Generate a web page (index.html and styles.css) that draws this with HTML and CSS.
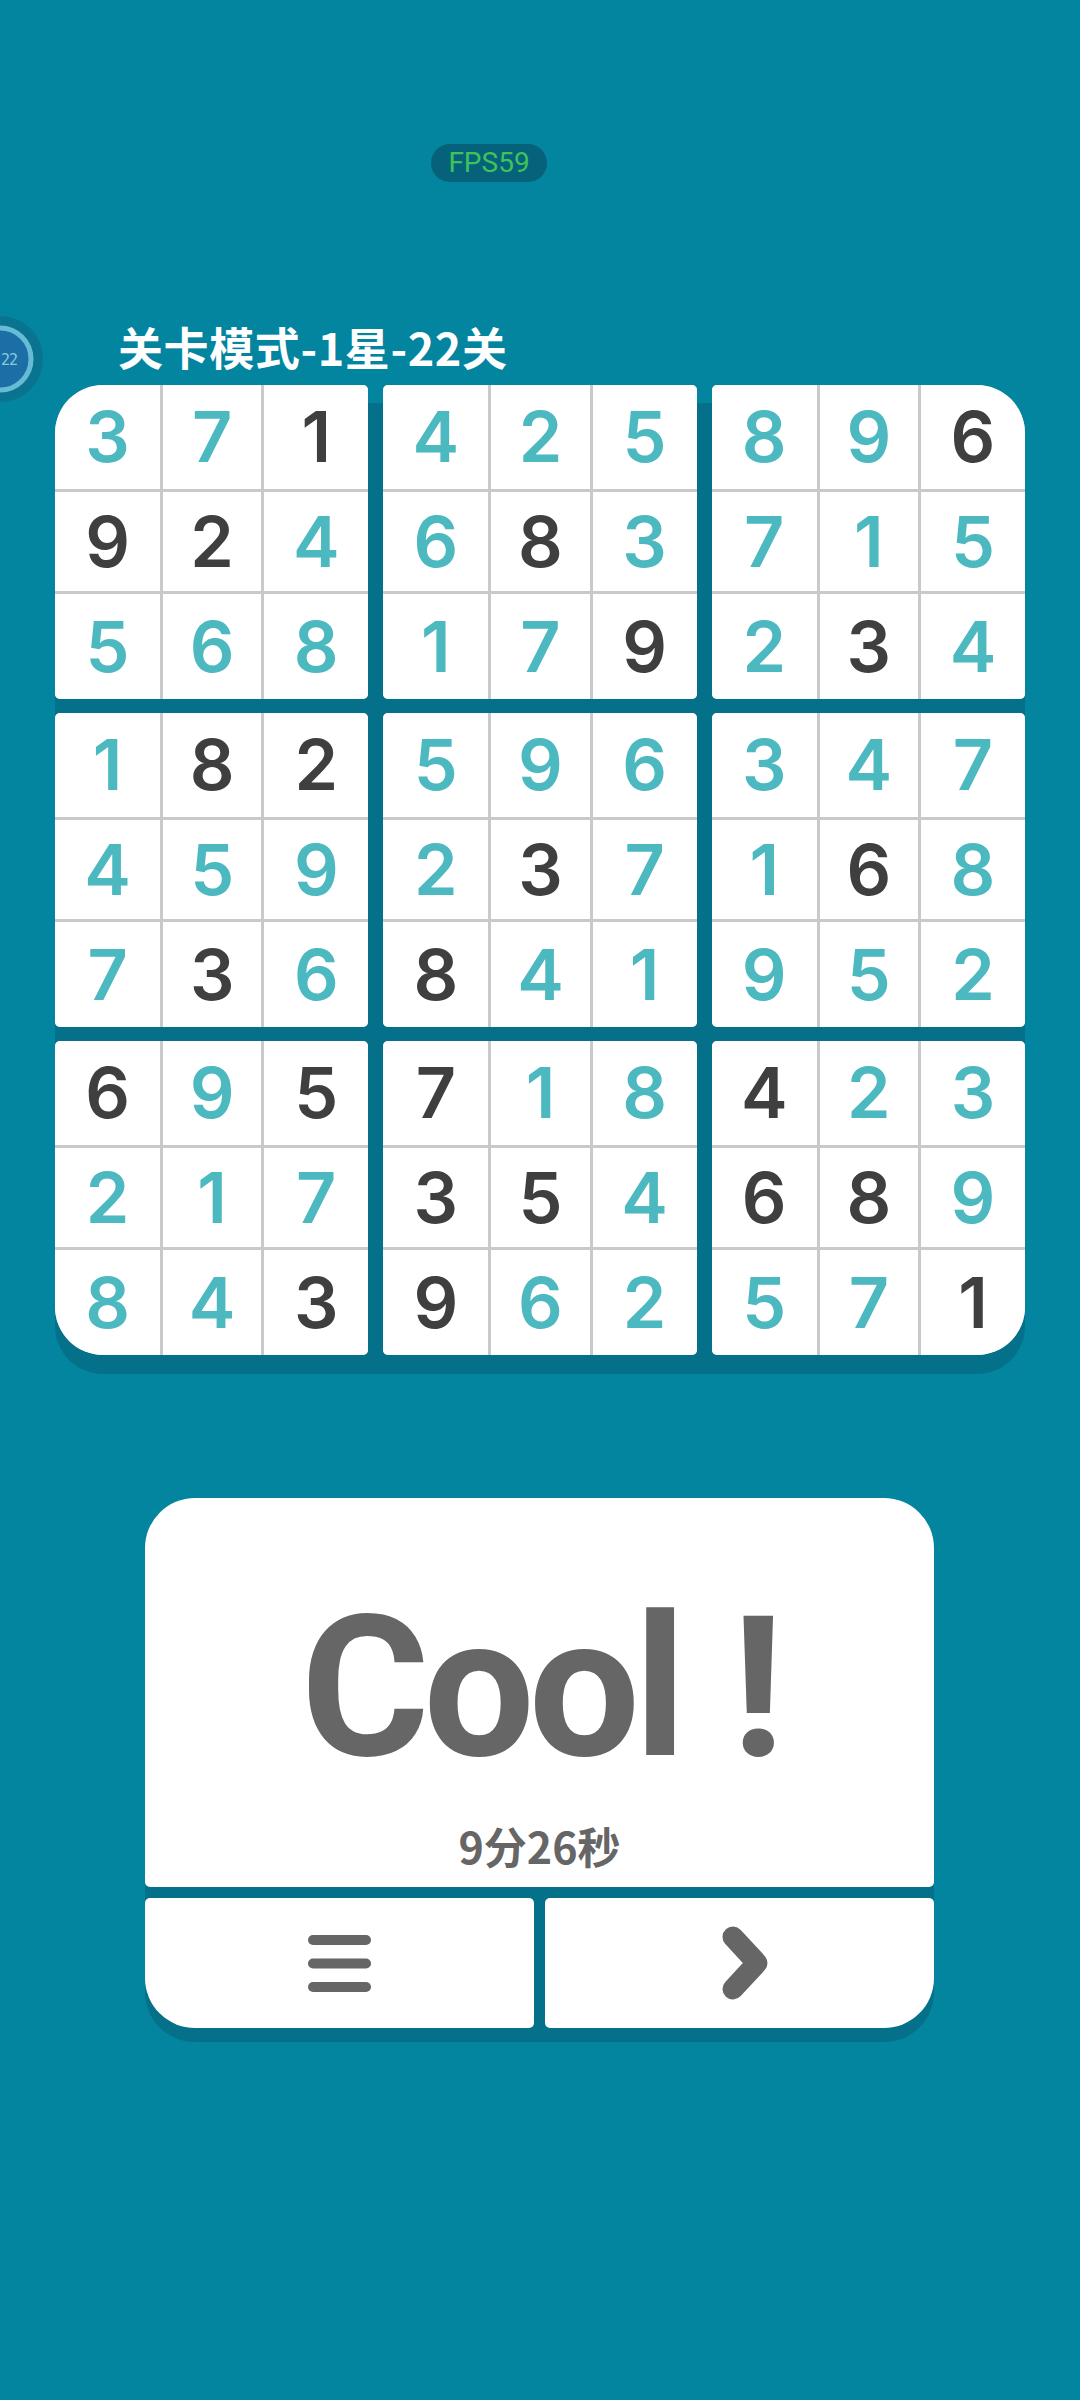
FILE: index.html
```html
<!DOCTYPE html>
<html lang="zh">
<head>
<meta charset="utf-8">
<title>数独</title>
<link rel="stylesheet" href="styles.css">
</head>
<body>
<div class="screen">
  <div class="level-ring">
    <svg width="86" height="86" viewBox="0 0 86 86">
      <circle cx="43" cy="43" r="43" fill="#0a7390"/>
      <circle cx="43" cy="43" r="31" fill="#1b6fa6"/>
      <circle cx="43" cy="43" r="31" fill="none" stroke="#66bcd4" stroke-width="5"/>
      <text x="44" y="49" class="ring-text">22</text>
    </svg>
  </div>

  <div class="fps">FPS59</div>

  <h1 class="title">关卡模式-1星-22关</h1>

  <div class="board">
    <div class="box tl">
      <span class="cell">3</span><span class="cell">7</span><span class="cell given">1</span>
      <span class="cell given">9</span><span class="cell given">2</span><span class="cell">4</span>
      <span class="cell">5</span><span class="cell">6</span><span class="cell">8</span>
    </div>
    <div class="box">
      <span class="cell">4</span><span class="cell">2</span><span class="cell">5</span>
      <span class="cell">6</span><span class="cell given">8</span><span class="cell">3</span>
      <span class="cell">1</span><span class="cell">7</span><span class="cell given">9</span>
    </div>
    <div class="box tr">
      <span class="cell">8</span><span class="cell">9</span><span class="cell given">6</span>
      <span class="cell">7</span><span class="cell">1</span><span class="cell">5</span>
      <span class="cell">2</span><span class="cell given">3</span><span class="cell">4</span>
    </div>
    <div class="box">
      <span class="cell">1</span><span class="cell given">8</span><span class="cell given">2</span>
      <span class="cell">4</span><span class="cell">5</span><span class="cell">9</span>
      <span class="cell">7</span><span class="cell given">3</span><span class="cell">6</span>
    </div>
    <div class="box">
      <span class="cell">5</span><span class="cell">9</span><span class="cell">6</span>
      <span class="cell">2</span><span class="cell given">3</span><span class="cell">7</span>
      <span class="cell given">8</span><span class="cell">4</span><span class="cell">1</span>
    </div>
    <div class="box">
      <span class="cell">3</span><span class="cell">4</span><span class="cell">7</span>
      <span class="cell">1</span><span class="cell given">6</span><span class="cell">8</span>
      <span class="cell">9</span><span class="cell">5</span><span class="cell">2</span>
    </div>
    <div class="box bl">
      <span class="cell given">6</span><span class="cell">9</span><span class="cell given">5</span>
      <span class="cell">2</span><span class="cell">1</span><span class="cell">7</span>
      <span class="cell">8</span><span class="cell">4</span><span class="cell given">3</span>
    </div>
    <div class="box">
      <span class="cell given">7</span><span class="cell">1</span><span class="cell">8</span>
      <span class="cell given">3</span><span class="cell given">5</span><span class="cell">4</span>
      <span class="cell given">9</span><span class="cell">6</span><span class="cell">2</span>
    </div>
    <div class="box br">
      <span class="cell given">4</span><span class="cell">2</span><span class="cell">3</span>
      <span class="cell given">6</span><span class="cell given">8</span><span class="cell">9</span>
      <span class="cell">5</span><span class="cell">7</span><span class="cell given">1</span>
    </div>
  </div>

  <div class="dialog">
    <div class="result">
      <div class="cool">Cool !</div>
      <div class="time">9分26秒</div>
    </div>
    <button class="btn btn-menu" type="button">
      <svg width="63" height="57" viewBox="0 0 63 57">
        <g stroke="#666666" stroke-width="10" stroke-linecap="round">
          <line x1="5" y1="5" x2="58" y2="5"/>
          <line x1="5" y1="28.5" x2="58" y2="28.5"/>
          <line x1="5" y1="52" x2="58" y2="52"/>
        </g>
      </svg>
    </button>
    <button class="btn btn-next" type="button">
      <svg width="46" height="74" viewBox="0 0 46 74">
        <path d="M11 11 L35 37 L11 63" fill="none" stroke="#666666" stroke-width="21" stroke-linecap="round" stroke-linejoin="round"/>
      </svg>
    </button>
  </div>
</div>
</body>
</html>
```

FILE: styles.css
```css
html, body {
  margin: 0;
  padding: 0;
}

body {
  width: 1080px;
  height: 2400px;
  overflow: hidden;
  background: #03849f;
  font-family: "Noto Sans", "Noto Sans CJK SC", sans-serif;
}

.screen {
  position: relative;
  width: 1080px;
  height: 2400px;
  padding-top: 144px;
  box-sizing: border-box;
}

.level-ring {
  position: absolute;
  left: -43px;
  top: 316px;
  width: 86px;
  height: 86px;
}

.level-ring svg {
  display: block;
}

.ring-text {
  font-family: "DejaVu Sans Mono", monospace;
  font-size: 15px;
  letter-spacing: -1px;
  fill: #8cc8dc;
}

.fps {
  margin-left: 431px;
  width: 116px;
  height: 38px;
  border-radius: 19px;
  background: #06627a;
  color: #3ec35b;
  font-family: Roboto, "Noto Sans", sans-serif;
  font-size: 28px;
  line-height: 38px;
  text-align: center;
}

.title {
  margin: 140px 0 0 118px;
  height: 50px;
  color: #ffffff;
  font-family: "Noto Sans CJK SC", sans-serif;
  font-weight: 700;
  font-size: 45px;
  letter-spacing: 0.6px;
  line-height: 50px;
}

.board {
  margin: 13px 0 0 55px;
  width: 970px;
  display: grid;
  grid-template-columns: repeat(3, 1fr);
  grid-template-rows: repeat(3, 314px);
  gap: 14px 15px;
  border-radius: 48px;
  background: linear-gradient(to bottom, transparent 18px, #04708a 18px);
  box-shadow: 0 19px 0 #04708a;
}

.box {
  display: grid;
  grid-template-columns: 105fr 98fr 104fr;
  grid-template-rows: 104fr 99fr 105fr;
  gap: 3px;
  background: #c9c9c9;
  border-radius: 5px;
  overflow: hidden;
}

.box.tl { border-top-left-radius: 48px; }
.box.tr { border-top-right-radius: 48px; }
.box.bl { border-bottom-left-radius: 48px; }
.box.br { border-bottom-right-radius: 48px; }

.cell {
  display: flex;
  align-items: center;
  justify-content: center;
  background: #ffffff;
  color: #4cb8c0;
  font-family: Inter, "Noto Sans", sans-serif;
  font-weight: 600;
  font-size: 70px;
  line-height: 1;
}

.cell.given {
  color: #3f3f3f;
}

.dialog {
  margin: 143px 0 0 145px;
  width: 789px;
  display: grid;
  grid-template-columns: 1fr 1fr;
  grid-template-rows: 389px 130px;
  gap: 11px;
  border-radius: 50px;
  background: linear-gradient(to bottom, transparent 14px, #04708a 14px);
  box-shadow: 0 14px 0 #04708a;
}

.result {
  grid-column: 1 / span 2;
  background: #ffffff;
  border-radius: 50px 50px 5px 5px;
  display: flex;
  flex-direction: column;
  align-items: center;
  padding-top: 91px;
  box-sizing: border-box;
}

.cool {
  font-family: Roboto, "Noto Sans", sans-serif;
  font-weight: 700;
  font-size: 197px;
  line-height: 197px;
  color: #666666;
  letter-spacing: -6px;
  word-spacing: 8px;
  height: 197px;
}

.time {
  margin-top: 38px;
  font-family: "Noto Sans CJK SC", sans-serif;
  font-weight: 700;
  font-size: 43px;
  line-height: 43px;
  color: #666666;
}

.btn {
  border: none;
  margin: 0;
  padding: 0;
  background: #ffffff;
  display: flex;
  align-items: center;
  justify-content: center;
}

.btn svg {
  display: block;
}

.btn-menu {
  border-radius: 5px 5px 5px 50px;
}

.btn-next {
  border-radius: 5px 5px 50px 5px;
}

.btn-next svg {
  margin-left: 10px;
}
```
